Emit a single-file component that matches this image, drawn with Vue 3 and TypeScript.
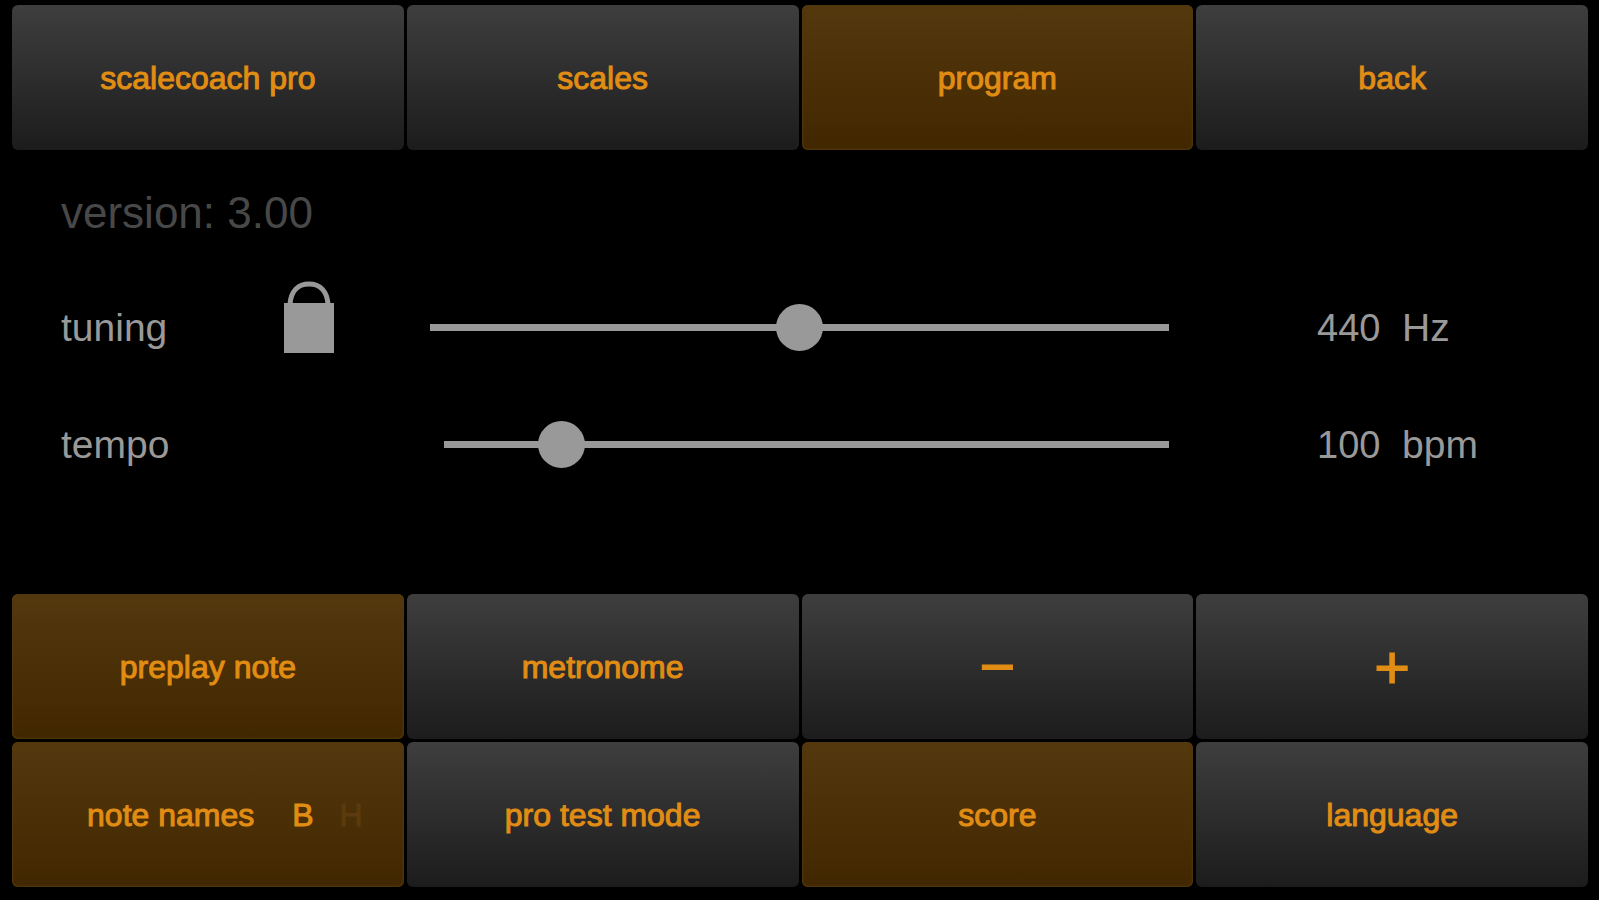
<script setup lang="ts">
import { ref } from 'vue'

interface Tile {
  id: string
  label: string
  active?: boolean
  symbol?: boolean
}

const tabs = ref<Tile[]>([
  { id: 'home', label: 'scalecoach pro' },
  { id: 'scales', label: 'scales' },
  { id: 'program', label: 'program', active: true },
  { id: 'back', label: 'back' },
])

const options = ref<Tile[]>([
  { id: 'preplay', label: 'preplay note', active: true },
  { id: 'metronome', label: 'metronome' },
  { id: 'minus', label: '−', symbol: true },
  { id: 'plus', label: '+', symbol: true },
  { id: 'names', label: 'note names', active: true },
  { id: 'test', label: 'pro test mode' },
  { id: 'score', label: 'score', active: true },
  { id: 'language', label: 'language' },
])

const tuning = ref(440)
const tempo = ref(100)

function press(tile: Tile) {
  if (tile.id === 'minus') tempo.value = Math.max(60, tempo.value - 1)
  else if (tile.id === 'plus') tempo.value = Math.min(350, tempo.value + 1)
  else if (tile.id !== 'language') tile.active = !tile.active
}
</script>

<template>
  <div class="app">
    <nav class="tiles">
      <button
        v-for="tab in tabs"
        :key="tab.id"
        type="button"
        class="tile"
        :class="{ active: tab.active }"
      >{{ tab.label }}</button>
    </nav>

    <main class="settings">
      <p class="version">version: 3.00</p>
      <div class="row">
        <label for="tuning">tuning</label>
        <button type="button" class="lock" aria-label="lock tuning">
          <svg viewBox="0 0 50 72" width="50" height="72" aria-hidden="true">
            <path d="M6 23 C7 10 14 3 25 3 S43 10 44 23" fill="none" stroke="#999" stroke-width="5" />
            <rect x="0" y="22" width="50" height="50" fill="#999" />
          </svg>
        </button>
        <input id="tuning" v-model.number="tuning" class="slider" type="range" min="430" max="450" />
        <span class="value">{{ tuning }}</span>
        <span>Hz</span>
      </div>
      <div class="row">
        <label for="tempo">tempo</label>
        <input id="tempo" v-model.number="tempo" class="slider short" type="range" min="60" max="350" />
        <span class="value">{{ tempo }}</span>
        <span>bpm</span>
      </div>
    </main>

    <section class="tiles">
      <button
        v-for="tile in options"
        :key="tile.id"
        type="button"
        class="tile"
        :class="{ active: tile.active, symbol: tile.symbol, names: tile.id === 'names' }"
        @click="press(tile)"
      >
        <span>{{ tile.label }}</span>
        <template v-if="tile.id === 'names'">
          <span class="choice">B</span>
          <span class="choice off">H</span>
        </template>
      </button>
    </section>
  </div>
</template>

<style>
body {
  margin: 0;
  background: #000;
}
</style>

<style scoped>
.app {
  box-sizing: border-box;
  min-height: 100vh;
  display: flex;
  flex-direction: column;
  padding: 5px 11px 13px 12px;
  background: #000;
  color: #999;
  font-family: "Liberation Sans", Arial, sans-serif;
}

.tiles {
  display: grid;
  grid-template-columns: repeat(4, 1fr);
  gap: 3px;
}

.tile {
  display: flex;
  align-items: center;
  justify-content: center;
  height: 145px;
  padding: 0;
  border: 0;
  border-radius: 6px;
  background: linear-gradient(#3e3e3e, #1c1c1c);
  color: #e18d14;
  font: inherit;
  font-size: 32px;
  line-height: 36px;
  -webkit-text-stroke: 1px #e18d14;
  cursor: pointer;
}

.tile.active {
  background: linear-gradient(#54380e, #412700);
  box-shadow: inset 0 0 2px 1px #523a0e;
}

.tile.symbol {
  font-size: 62px;
}

.tile.names {
  padding-left: 34px;
}

.choice {
  margin-left: 38px;
}

.choice.off {
  margin-left: 26px;
  color: #5b3b0d;
  -webkit-text-stroke-color: #5b3b0d;
}

.settings {
  flex: 1;
  padding: 38px 0 0 49px;
}

.version {
  margin: 0 0 31px;
  color: #484848;
  font-size: 44px;
  line-height: 50px;
}

.row {
  display: grid;
  grid-template-columns: 223px 146px 1fr 233px 186px;
  align-items: center;
  height: 117px;
  font-size: 39px;
  line-height: 44px;
}

.lock {
  align-self: start;
  justify-self: start;
  margin-top: 12px;
  padding: 0;
  border: 0;
  background: none;
  cursor: pointer;
}

.lock svg {
  display: block;
}

.value {
  padding-left: 148px;
  font-size: 38px;
}

.slider {
  grid-column: 3;
  appearance: none;
  height: 47px;
  margin: 0;
  background: linear-gradient(#999, #999) center / 100% 7px no-repeat;
  cursor: pointer;
}

.slider.short {
  margin-left: 14px;
}

.slider::-webkit-slider-thumb {
  appearance: none;
  width: 47px;
  height: 47px;
  border-radius: 50%;
  background: #999;
}
</style>
